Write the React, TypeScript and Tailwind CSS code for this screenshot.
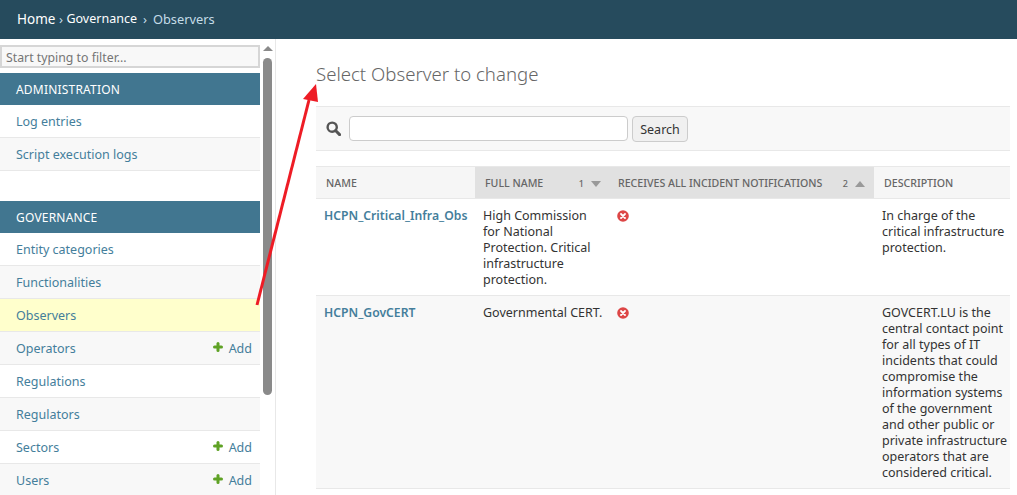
import { Plus } from "lucide-react";

const font = "font-['Noto_Sans','Open_Sans',sans-serif]";

type NavItem = { label: string; add?: boolean; current?: boolean };

const adminItems: NavItem[] = [{ label: "Log entries" }, { label: "Script execution logs" }];

const governanceItems: NavItem[] = [
  { label: "Entity categories" },
  { label: "Functionalities" },
  { label: "Observers", current: true },
  { label: "Operators", add: true },
  { label: "Regulations" },
  { label: "Regulators" },
  { label: "Sectors", add: true },
  { label: "Users", add: true },
];

function Caption({ children }: { children: string }) {
  return (
    <div className="flex h-8 items-center bg-[#417690] pt-[2px] pl-4 text-[12px] text-white uppercase tracking-[0.2px]">
      {children}
    </div>
  );
}

function NavRow({ item, index }: { item: NavItem; index: number }) {
  const bg = item.current ? "bg-[#ffffcc]" : index % 2 === 0 ? "bg-white" : "bg-[#f8f8f8]";
  return (
    <div className={`flex h-[33px] items-center justify-between border-b border-[#e8e8e8] pt-[2px] pr-2 pl-4 text-[12.5px] text-[#447e9b] ${bg}`}>
      <span>{item.label}</span>
      {item.add && (
        <span className="flex items-center gap-[5px]">
          <Plus className="mb-[5px] size-[12px] text-[#5fa225]" strokeWidth={6} />
          Add
        </span>
      )}
    </div>
  );
}

function Sidebar() {
  return (
    <aside className="flex w-[276px] shrink-0 border-r border-[#e8e8e8]">
      <div className="w-[260px] shrink-0 pt-[6px]">
        <div className="mb-[5px] flex h-[23px] items-center border-2 border-[#d6d6d6] bg-[#f8f8f8] pt-[3px] pl-1 text-[12.3px] text-[#757575]">
          Start typing to filter...
        </div>
        <Caption>Administration</Caption>
        {adminItems.map((item, i) => (
          <NavRow key={item.label} item={item} index={i} />
        ))}
        <div className="h-[30px]" />
        <Caption>Governance</Caption>
        {governanceItems.map((item, i) => (
          <NavRow key={item.label} item={item} index={i} />
        ))}
      </div>
      {/* scrollbar */}
      <div className="ml-[3px] flex w-[9px] flex-col items-center pt-[7px]">
        <div className="h-0 w-0 border-x-[5px] border-b-[5px] border-x-transparent border-b-[#8a8a8a]" />
        <div className="mt-[7px] h-[337px] w-[9px] rounded-full bg-[#8a8a8a]" />
      </div>
    </aside>
  );
}

function SortHead({ label, n, up, width, pad }: { label: string; n: number; up?: boolean; width: string; pad: string }) {
  return (
    <div className={`flex items-center bg-[#e1e1e1] pr-[9px] ${pad} ${width}`}>
      <span className="flex-1">{label}</span>
      <span className="mr-[7px] text-[9px]">{n}</span>
      <span className={`h-0 w-0 border-x-[5px] border-x-transparent ${up ? "border-b-[6px] border-b-[#999]" : "border-t-[6px] border-t-[#999]"}`} />
    </div>
  );
}

function NoIcon() {
  return (
    <svg viewBox="0 0 12 12" className="size-[12px]">
      <circle cx="6" cy="6" r="5.8" fill="#dd4646" />
      <path d="M4 4l4 4M8 4l-4 4" stroke="#fff" strokeWidth="1.8" strokeLinecap="round" />
    </svg>
  );
}

function SearchIcon() {
  return (
    <svg viewBox="0 0 15 15" className="size-[15px]" fill="none" stroke="#555" strokeWidth="2.4">
      <circle cx="6.2" cy="6.2" r="4.6" />
      <path d="M9.8 9.8L13.6 13.6" strokeWidth="3" strokeLinecap="round" />
    </svg>
  );
}

function Row({ name, full, desc, bg, height }: { name: string; full: string; desc: string; bg: string; height: string }) {
  return (
    <div className={`flex border-b border-[#e8e8e8] pt-[9px] text-[12.5px] leading-4 ${bg} ${height}`}>
      <div className="w-[159px] shrink-0 pl-2 text-[12.2px] font-semibold text-[#447e9b]">{name}</div>
      <div className="w-[135px] shrink-0 pr-1 pl-2 text-[#333]">{full}</div>
      <div className="w-[264px] shrink-0 pt-[2px] pl-[7px]">
        <NoIcon />
      </div>
      <div className="w-[136px] shrink-0 pl-2 text-[#333]">{desc}</div>
    </div>
  );
}

export default function App() {
  return (
    <div className={`relative flex h-[495px] w-[1017px] flex-col overflow-hidden bg-white ${font}`}>
      <nav className="flex h-[39px] shrink-0 items-center bg-[#264b5d] pl-[17px] text-[13px] text-white">
        <span className="text-[13.5px]">Home</span>
        <span className="mx-[3.5px] text-[#c4dce8]">›</span>
        <span className="text-[12.5px]">Governance</span>
        <span className="mx-[6px] text-[#c4dce8]">›</span>
        <span className="text-[12.8px] text-[#c4dce8]">Observers</span>
      </nav>

      <div className="flex min-h-0 flex-1">
        <Sidebar />
        <main className="w-[694px] pt-[23px] pl-[40px] box-content">
          <h1 className="text-[18.6px] leading-6 font-light text-[#666]">Select Observer to change</h1>

          <div className="mt-[20px] flex h-[45px] items-center border-y border-[#e8e8e8] bg-[#f8f8f8] pl-[10px]">
            <SearchIcon />
            <div className="ml-[8px] h-[25px] w-[279px] rounded-[4px] border border-[#cccccc] bg-white" />
            <div className="ml-[4px] flex h-[26px] w-[56px] items-center justify-center rounded-[4px] border border-[#cccccc] bg-[#f0f0f0] pt-[3px] text-[12.5px] text-[#333]">
              Search
            </div>
          </div>

          <div className="mt-[15px] flex h-[33px] items-stretch border-y border-[#e8e8e8] text-[10.6px] font-medium text-[#666] uppercase">
            <div className="flex w-[159px] items-center bg-[#f6f6f6] pt-[2px] pl-[10px]">Name</div>
            <SortHead label="Full name" n={1} width="w-[135px]" pad="pl-[10px] pt-[2px]" />
            <SortHead label="Receives all incident notifications" n={2} up width="w-[264px]" pad="pl-[8px] pt-[2px]" />
            <div className="flex w-[136px] items-center bg-[#f6f6f6] pt-[2px] pl-[10px]">Description</div>
          </div>

          <Row
            name="HCPN_Critical_Infra_Obs"
            full="High Commission for National Protection. Critical infrastructure protection."
            desc="In charge of the critical infrastructure protection."
            bg="bg-white"
            height="h-[97px]"
          />
          <Row
            name="HCPN_GovCERT"
            full="Governmental&nbsp;CERT."
            desc="GOVCERT.LU is the central contact point for all types of IT incidents that could compromise the information systems of the government and other public or private infrastructure operators that are considered critical."
            bg="bg-[#f8f8f8]"
            height="h-[193px]"
          />
        </main>
      </div>

      {/* red annotation arrow drawn over the screenshot */}
      <svg className="absolute top-0 left-0 size-full" viewBox="0 0 1017 495">
        <path d="M257 305L309 100" stroke="#ee1c25" strokeWidth="3" fill="none" />
        <path d="M316 84L303 99L318 102Z" fill="#ee1c25" />
      </svg>
    </div>
  );
}
